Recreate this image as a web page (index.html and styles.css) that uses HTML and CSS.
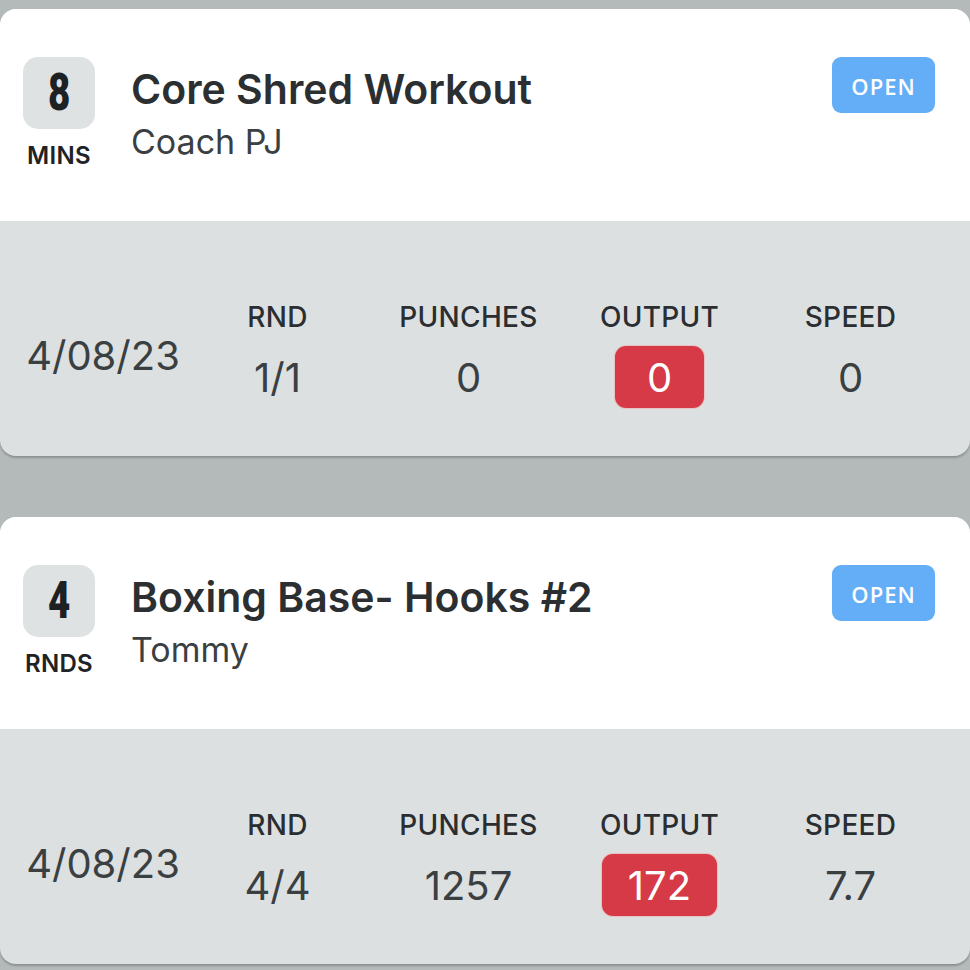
FILE: index.html
```html
<!DOCTYPE html>
<html>
<head>
<meta charset="utf-8">
<link rel="stylesheet" href="styles.css">
</head>
<body>
<div class="list">
  <div class="card">
    <div class="head">
      <div class="dur">
        <div class="dur-box"><span class="dur-num">8</span></div>
        <div class="dur-unit">MINS</div>
      </div>
      <div class="info">
        <div class="title">Core Shred Workout</div>
        <div class="coach">Coach PJ</div>
      </div>
      <div class="status">OPEN</div>
    </div>
    <div class="stats">
      <div class="date">4/08/23</div>
      <div class="stat"><div class="label">RND</div><div class="value">1/1</div></div>
      <div class="stat"><div class="label">PUNCHES</div><div class="value">0</div></div>
      <div class="stat"><div class="label">OUTPUT</div><div class="value"><span class="hl">0</span></div></div>
      <div class="stat"><div class="label">SPEED</div><div class="value">0</div></div>
    </div>
  </div>
  <div class="card">
    <div class="head">
      <div class="dur">
        <div class="dur-box"><span class="dur-num">4</span></div>
        <div class="dur-unit">RNDS</div>
      </div>
      <div class="info">
        <div class="title">Boxing Base- Hooks #2</div>
        <div class="coach">Tommy</div>
      </div>
      <div class="status">OPEN</div>
    </div>
    <div class="stats">
      <div class="date">4/08/23</div>
      <div class="stat"><div class="label">RND</div><div class="value">4/4</div></div>
      <div class="stat"><div class="label">PUNCHES</div><div class="value">1257</div></div>
      <div class="stat"><div class="label">OUTPUT</div><div class="value"><span class="hl">172</span></div></div>
      <div class="stat"><div class="label">SPEED</div><div class="value">7.7</div></div>
    </div>
  </div>
</div>
</body>
</html>
```
FILE: styles.css
```css
html, body {
  margin: 0;
  padding: 0;
  background: #b4b9ba;
}
body {
  font-family: Inter, "Noto Sans", sans-serif;
  width: 970px;
  height: 970px;
  overflow: hidden;
}
.list {
  display: flex;
  flex-direction: column;
  gap: 61px;
  padding-top: 9px;
}
.card {
  border-radius: 16px;
  overflow: hidden;
  background: #dde0e1;
  box-shadow: 0 2px 2px rgba(0, 0, 0, 0.22);
}
.head {
  background: #ffffff;
  height: 212px;
  box-sizing: border-box;
  padding: 48px 35px 0 23px;
  display: flex;
  align-items: flex-start;
}
.dur {
  width: 72px;
  display: flex;
  flex-direction: column;
  align-items: center;
}
.dur-box {
  width: 72px;
  height: 72px;
  border-radius: 15px;
  background: #dfe2e3;
  display: flex;
  align-items: center;
  justify-content: center;
}
.dur-num {
  display: inline-block;
  font-family: Roboto, "Liberation Sans", sans-serif;
  font-weight: 900;
  font-size: 52px;
  line-height: 1;
  color: #1d2123;
  transform: scaleX(0.74);
}
.dur-unit {
  margin-top: 13px;
  font-size: 24px;
  line-height: 1.2;
  font-weight: 600;
  letter-spacing: 0.3px;
  color: #1f2325;
}
.info {
  flex: 1;
  margin-left: 36px;
  margin-top: 8px;
}
.title {
  font-size: 41px;
  line-height: 1.2;
  font-weight: 600;
  color: #2b2f31;
}
.coach {
  margin-top: 8px;
  font-size: 34px;
  line-height: 1.2;
  font-weight: 400;
  color: #3b3f42;
}
.status {
  width: 103px;
  height: 56px;
  border-radius: 9px;
  background: #64adf7;
  color: #ffffff;
  font-family: "Open Sans", sans-serif;
  font-weight: 600;
  font-size: 22px;
  letter-spacing: 1px;
  display: flex;
  align-items: center;
  justify-content: center;
  padding-top: 2px;
  box-sizing: border-box;
}
.stats {
  height: 235px;
  box-sizing: border-box;
  padding: 79px 24px 0 24px;
  display: flex;
  align-items: flex-start;
}
.date {
  width: 158px;
  margin-top: 32px;
  text-align: center;
  font-size: 40px;
  line-height: 48px;
  color: #3a3f42;
}
.stat {
  width: 191px;
  display: flex;
  flex-direction: column;
  align-items: center;
}
.label {
  font-size: 28px;
  line-height: 34px;
  font-weight: 500;
  color: #2a2e31;
  letter-spacing: 0.3px;
}
.value {
  margin-top: 19px;
  height: 48px;
  display: flex;
  align-items: center;
  justify-content: center;
  font-size: 40px;
  color: #3a3f42;
}
.hl {
  display: flex;
  align-items: center;
  justify-content: center;
  box-sizing: border-box;
  min-width: 89px;
  height: 62px;
  padding: 0 26px;
  border-radius: 11px;
  background: #d63a47;
  color: #ffffff;
  flex-shrink: 0;
  box-shadow: 0 0 0 1px rgba(245, 160, 165, 0.5);
}
```
